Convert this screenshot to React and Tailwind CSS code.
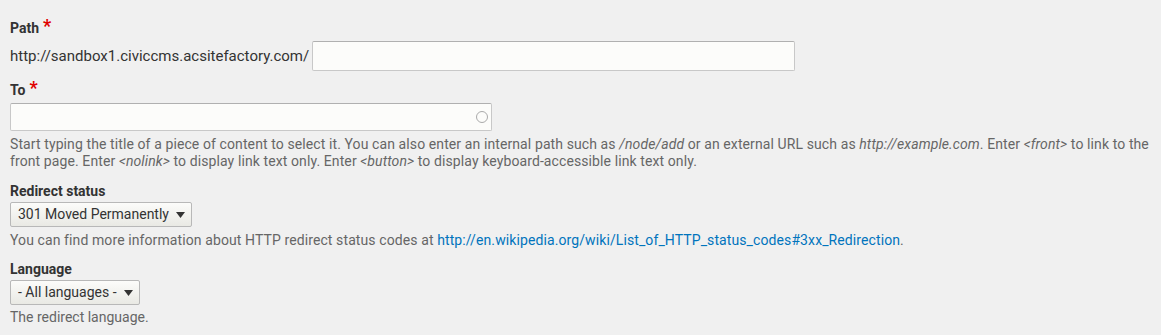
import React from 'react';

const Label = ({ children, required, className = '' }) => (
    <label className={`flex items-start text-[14px] leading-5 font-bold text-[#333] ${className}`}>
        {children}
        {required && <span className='text-[#e00000] ml-[4px] text-[18px] leading-[16px] font-bold'>*</span>}
    </label>
)

const Select = ({ value, width }) => (
    <div className={`flex items-center justify-between h-[25px] ${width} border border-[#b8b8b8] rounded-[2px] bg-gradient-to-b from-[#fcfcfa] to-[#e9e9e4] pl-[7px] pr-[6px] text-[14px] text-[#333]`}>
        <span>{value}</span>
        <svg width='9' height='6' viewBox='0 0 9 6'><path d='M0 0h9L4.5 6z' fill='#333' /></svg>
    </div>
)

export default function App() {
    return (
        <main className='min-h-[335px] bg-[#f0f0f0] px-[10px] pt-[18px] text-[#333]' style={{ fontFamily: 'Roboto, "Liberation Sans", sans-serif' }}>

            {/* path */}
            <Label required>Path</Label>
            <div className='flex items-center gap-[3px] mt-[3px]'>
                <span className='text-[15px]'>http://sandbox1.civiccms.acsitefactory.com/</span>
                <input className='w-[483px] h-[30px] bg-[#fcfcfa] border border-[#c8c8c8] border-t-[#b0b0b0] rounded-[2px] outline-none' />
            </div>

            {/* to */}
            <Label required className='mt-[9px]'>To</Label>
            <div className='relative w-[482px] mt-[3px]'>
                <input className='w-full h-[28px] bg-[#fcfcfa] border border-[#c8c8c8] border-t-[#b0b0b0] rounded-[2px] outline-none' />
                <span className='absolute right-[4px] top-[8px] w-[12px] h-[12px] rounded-full border-[1.5px] border-[#aaa]'></span>
            </div>
            <p className='text-[14px] leading-[17px] text-[#666] mt-[5px] tracking-[0.1px] max-w-[1145px]'>
                Start typing the title of a piece of content to select it. You can also enter an internal path such as <em>/node/add</em> or an external URL such as <em>http://example.com</em>. Enter <em>&lt;front&gt;</em> to link to the front page. Enter <em>&lt;nolink&gt;</em> to display link text only. Enter <em>&lt;button&gt;</em> to display keyboard-accessible link text only.
            </p>

            {/* redirect status */}
            <Label className='mt-[11px]'>Redirect status</Label>
            <div className='mt-[1px]'>
                <Select value='301 Moved Permanently' width='w-[182px]' />
            </div>
            <p className='text-[14px] leading-[17px] text-[#666] mt-[5px] tracking-[0.1px]'>
                You can find more information about HTTP redirect status codes at <a className='text-[#0074bd]' href='#'>http://en.wikipedia.org/wiki/List_of_HTTP_status_codes#3xx_Redirection</a>.
            </p>

            {/* language */}
            <Label className='mt-[10px]'>Language</Label>
            <div className='mt-[1px]'>
                <Select value='- All languages -' width='w-[130px]' />
            </div>
            <p className='text-[14px] leading-[17px] text-[#666] mt-[4px]'>The redirect language.</p>
        </main>
    )
}
